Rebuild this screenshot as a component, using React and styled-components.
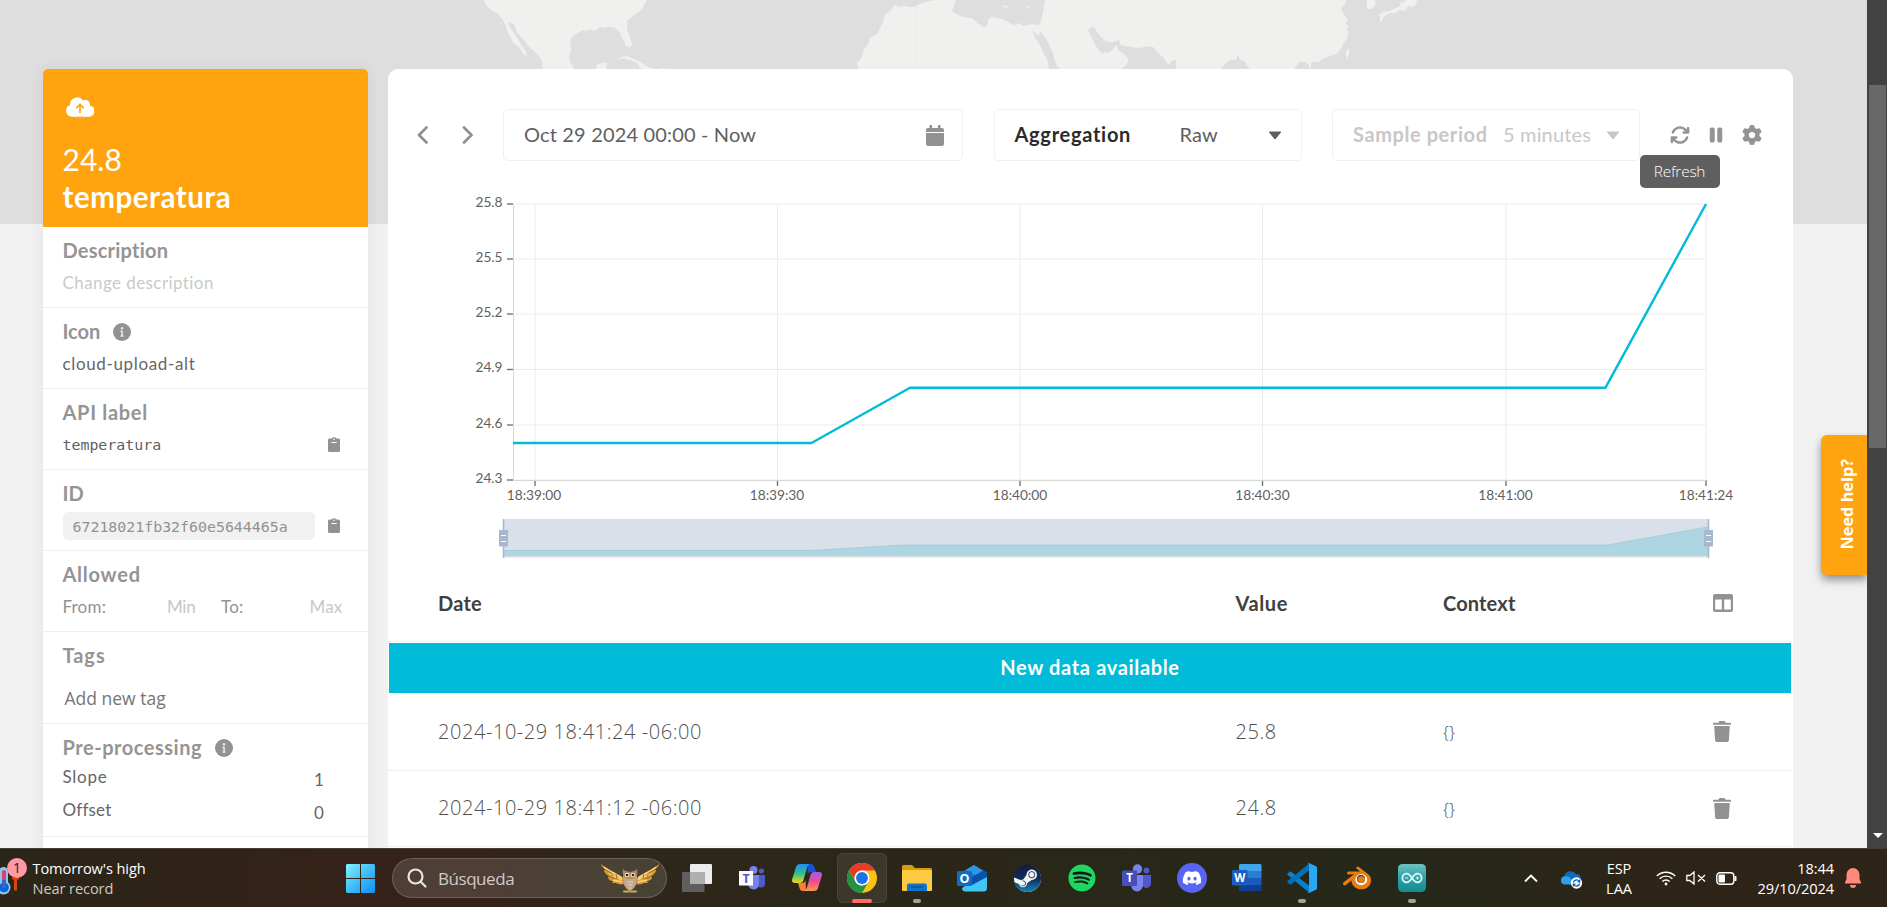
import React from 'react';
import styled, { createGlobalStyle, css } from 'styled-components';
import { FaSteam, FaSpotify, FaDiscord } from 'react-icons/fa';
import { FaArrowsRotate, FaPause, FaGear } from 'react-icons/fa6';
import { SiBlender } from 'react-icons/si';

const Global = createGlobalStyle`
  * { box-sizing: border-box; }
  body { margin: 0; overflow: hidden; font-family: Lato, "Open Sans", sans-serif; color: #5f5f5f; }
  svg { display: block; flex: none; }
`;

const Screen = styled.div`
  width: 1887px;
  height: 907px;
  display: flex;
  flex-direction: column;
  overflow: hidden;
`;
const Browser = styled.div`
  height: 848px;
  display: flex;
  overflow: hidden;
`;
const Page = styled.main`
  position: relative;
  width: 1867px;
  height: 848px;
  overflow: hidden;
  display: flex;
  align-items: flex-start;
  gap: 20px;
  padding: 69px 74px 0 43px;
  background: linear-gradient(#dedede 0 224px, #f1f1f1 224px);
`;
const MapLayer = styled.svg`
  position: absolute;
  left: 0;
  top: 0;
`;

/* ---------- sidebar ---------- */
const Sidebar = styled.aside`
  position: relative;
  width: 325px;
  height: 900px;
  flex: none;
  background: #fff;
  border-radius: 5px 5px 0 0;
  box-shadow: 0 0 14px rgba(0, 40, 30, 0.07);
`;
const SideHead = styled.header`
  height: 158px;
  padding: 28px 20px 0 19.5px;
  background: #ffa30e;
  color: #fff;
  border-radius: 5px 5px 0 0;
`;
const HeadIcon = styled.div`
  height: 21px;
  padding-left: 3.5px;
`;
const HeadValue = styled.div`
  margin-top: 23px;
  font-size: 30px;
  line-height: 36px;
`;
const HeadName = styled.div`
  font-size: 29.5px;
  font-weight: 700;
  line-height: 36px;
  letter-spacing: 0.55px;
  margin-top: 1.5px;
`;
const Section = styled.section`
  height: ${(p) => p.$h}px;
  padding: 11px 20px 0 19.5px;
  border-bottom: 1px solid #efefef;
`;
const SectionTitle = styled.h3`
  display: flex;
  align-items: center;
  gap: 13px;
  height: 24px;
  margin: 0;
  font-size: 20px;
  font-weight: 700;
  line-height: 24px;
  letter-spacing: ${(p) => p.$ls}px;
  color: #949494;
  svg { margin: 2px 0 0 0; }
`;
const Field = styled.div`
  display: flex;
  align-items: center;
  height: 24px;
  margin-top: ${(p) => p.$gap ?? 9}px;
  padding-right: ${(p) => p.$right ?? 8.5}px;
  justify-content: ${(p) => (p.$split ? 'space-between' : 'flex-start')};
`;
const FieldText = styled.span`
  font-size: 17px;
  line-height: 24px;
  letter-spacing: ${(p) => p.$ls ?? 0.2}px;
  color: ${(p) => p.$color ?? '#666'};
  ${(p) => p.$w && css`width: ${p.$w}px;`}
  text-align: ${(p) => (p.$end ? 'right' : 'left')};
`;
const Lowered = styled(FieldText)`
  padding-top: 6px;
`;
const Mono = styled.span`
  font-family: "DejaVu Sans Mono", monospace;
  font-size: 14.9px;
  line-height: 24px;
  color: ${(p) => p.$color ?? '#5f5f5f'};
`;
const IdBox = styled.div`
  width: 252px;
  height: 28px;
  padding: 3px 10px;
  border-radius: 5px;
  background: #f1f1f1;
`;
const TagInput = styled.div`
  margin: 19px 0 0 2px;
  font: 400 17.5px/24px "Open Sans", sans-serif;
  color: #757575;
`;
const IdField = styled(Field)`
  height: 28px;
  margin-top: 7px;
`;

/* ---------- main card ---------- */
const Card = styled.section`
  position: relative;
  width: 1405px;
  height: 900px;
  flex: none;
  padding-top: 40px;
  background: #fff;
  border-radius: 10px 10px 0 0;
`;
const Toolbar = styled.div`
  display: flex;
  align-items: center;
  height: 52px;
  padding-left: 28.5px;
`;
const Arrows = styled.div`
  display: flex;
  gap: 33px;
  width: 86.5px;
`;
const Box = styled.div`
  display: flex;
  align-items: center;
  width: ${(p) => p.$w}px;
  height: 52px;
  margin-right: 30.5px;
  padding: 0 ${(p) => p.$pr}px 3px 20px;
  border: 1px solid #f0f0f0;
  border-radius: 5px;
  white-space: nowrap;
  font-size: 20px;
  line-height: 24px;
  color: ${(p) => (p.$disabled ? '#c7c7c7' : '#5f5f5f')};
  svg { margin-top: 3px; }
`;
const BoxLabel = styled.b`
  width: ${(p) => p.$w}px;
  color: ${(p) => (p.$disabled ? '#c7c7c7' : '#2b2b2b')};
  letter-spacing: ${(p) => (p.$disabled ? 0.58 : 0.72)}px;
`;
const BoxText = styled.span`
  flex: 1;
  letter-spacing: 0.16px;
`;
const Actions = styled.div`
  position: relative;
  display: flex;
  align-items: center;
  margin-left: -0.5px;
  color: #949494;
  font-size: 20px;
  svg:nth-child(2) { margin: 0 16.5px 0 16px; }
`;
const Tooltip = styled.div`
  position: absolute;
  left: -30px;
  top: 30px;
  width: 80px;
  height: 33px;
  border-radius: 5px;
  background: #5f5f5f;
  color: #fff;
  text-align: center;
  font: 300 15.4px/33px "Open Sans", sans-serif;
  letter-spacing: -0.2px;
`;
const ChartSvg = styled.svg`
  margin-top: 24px;
  text {
    font: 400 13.7px Lato, sans-serif;
    fill: #5f5f5f;
  }
`;
const Row = styled.div`
  display: grid;
  grid-template-columns: 797.5px 207.5px 1fr 20px;
  align-items: center;
  height: ${(p) => p.$h}px;
  padding: 0 60px ${(p) => p.$pb ?? 0}px 50px;
  border-bottom: 1px solid #efefef;
`;
const Th = styled.span`
  font-size: 20px;
  font-weight: 700;
  line-height: 24px;
  letter-spacing: ${(p) => p.$ls}px;
  color: #404040;
`;
const Td = styled.span`
  font: 300 20px/24px "Open Sans", sans-serif;
  letter-spacing: 0.56px;
  color: #505050;
`;
const Braces = styled(Td)`
  padding-top: 1px;
  font-size: 17px;
  letter-spacing: 0;
`;
const Banner = styled.div`
  height: 50px;
  margin: 1px 2px 0 1px;
  background: #00bcd8;
  color: #fff;
  text-align: center;
  font-weight: 700;
  font-size: 20px;
  line-height: 48px;
  letter-spacing: 0.66px;
`;
const HelpTab = styled.div`
  position: absolute;
  right: 0;
  top: 434.5px;
  width: 46px;
  height: 140px;
  display: flex;
  align-items: center;
  justify-content: center;
  border-radius: 6px 0 0 6px;
  background: #ffa30e;
  color: #fff;
  box-shadow: 0 5px 9px rgba(0, 0, 0, 0.4);
  span {
    writing-mode: vertical-rl;
    transform: rotate(180deg);
    font: 700 16.3px/24px "Open Sans", sans-serif;
    margin-left: 5px;
  }
`;
const Scrollbar = styled.div`
  width: 20px;
  height: 848px;
  padding: 85px 1px 9px 2px;
  display: flex;
  flex-direction: column;
  justify-content: space-between;
  align-items: center;
  background: #424242;
`;
const Thumb = styled.div`
  width: 17px;
  height: 363px;
  background: #686868;
`;

/* ---------- taskbar ---------- */
const Taskbar = styled.footer`
  height: 59px;
  display: flex;
  align-items: center;
  border-top: 1px solid #453f35;
  background: linear-gradient(90deg, #2b2618 0, #2f2317 160px, #352218 330px, #352218 480px, #2d2718 640px, #2a2718 1000px, #252819 1400px, #2d2517 1650px, #2e2417 1887px);
  font-family: "Open Sans", sans-serif;
  color: #fff;
`;
const Weather = styled.div`
  width: 333px;
  display: flex;
  align-items: center;
  gap: 4.5px;
`;
const Stack = styled.div`
  display: flex;
  flex-direction: column;
  width: ${(p) => p.$w ?? 'auto'};
  margin-left: ${(p) => p.$ml ?? 0}px;
  margin-top: -1px;
  text-align: ${(p) => p.$align ?? 'left'};
  font-size: 14.6px;
  line-height: 20px;
  letter-spacing: -0.1px;
  white-space: nowrap;
`;
const Dim = styled.span`
  color: #cfcbc6;
`;
const Search = styled.div`
  width: 275px;
  height: 40px;
  margin: 0 2.5px 0 4px;
  padding: 0 7px 0 14px;
  display: flex;
  align-items: center;
  border: 1px solid rgba(255, 255, 255, 0.17);
  border-radius: 20px;
  background: rgba(255, 255, 255, 0.13);
  color: #cfcac5;
  font-size: 17px;
  letter-spacing: -0.45px;
  span { flex: 1; padding-left: 11px; }
`;
const Cell = styled.div`
  position: relative;
  width: 55px;
  height: 58px;
  display: flex;
  align-items: center;
  justify-content: center;
`;
const Tile = styled.div`
  width: 50px;
  height: 50px;
  display: flex;
  align-items: center;
  justify-content: center;
  border-radius: 6px;
  ${(p) => p.$active && css`
    background: rgba(255, 255, 255, 0.08);
    box-shadow: inset 0 0 0 1px rgba(255, 255, 255, 0.07);
  `}
`;
const Mark = styled.i`
  position: absolute;
  bottom: 4px;
  width: ${(p) => (p.$active ? 20 : 8)}px;
  height: 4px;
  border-radius: 2px;
  background: ${(p) => (p.$active ? '#ff6b60' : '#a3a198')};
`;
const Glyph = styled.span`
  display: flex;
  align-items: center;
  justify-content: center;
  width: ${(p) => p.$s}px;
  height: ${(p) => p.$s}px;
  border-radius: 50%;
  background: ${(p) => p.$bg};
  color: ${(p) => p.$fg};
  font-size: ${(p) => p.$f}px;
`;
const Tray = styled.div`
  display: flex;
  align-items: center;
  padding-left: 84.5px;
`;

/* ---------- small drawings ---------- */
const CloudUpload = () => (
  <svg width="28" height="20" viewBox="0 0 28 20">
    <path d="M6 19.700A6 6 0 0 1 4 8.100 7.200 7.200 0 0 1 17 3.400a4.600 4.600 0 0 1 6.800 5A5.700 5.700 0 0 1 22.300 19.700z" fill="#fff" />
    <path d="M14 16V8M10.200 11.200L14 7.400l3.800 3.800" fill="none" stroke="#ffa30e" strokeWidth="1.700" />
  </svg>
);
const InfoIcon = () => (
  <svg width="18" height="18" viewBox="0 0 18 18">
    <circle cx="9" cy="9" r="9" fill="#929292" />
    <path d="M7.500 7.600h2.300v5h.8v1.100H7.400v-1.100h.9V8.700h-.8z" fill="#eee" />
    <circle cx="9" cy="5.300" r="1.200" fill="#eee" />
  </svg>
);
const Clipboard = () => (
  <svg width="12" height="16" viewBox="0 0 12 16">
    <path d="M1.500 1.500H3.600A2.500 1.800 0 0 1 8.400 1.500h2.100A1.500 1.500 0 0 1 12 3v10.500a1.500 1.500 0 0 1-1.500 1.500h-9A1.500 1.500 0 0 1 0 13.500V3a1.500 1.500 0 0 1 1.500-1.500z" fill="#929292" />
    <circle cx="6" cy="2.200" r=".8" fill="#fff" />
    <path d="M3.300 5.500h5.400" stroke="#fff" strokeWidth="1" />
  </svg>
);
const Chevron = ({ right }) => (
  <svg width="12" height="18" viewBox="0 0 12 18">
    <path d={right ? 'M2 1.5 9.5 9 2 16.5' : 'M9.5 1.5 2 9 9.5 16.5'} fill="none" stroke="#909090" strokeWidth="2.7" strokeLinecap="round" strokeLinejoin="round" />
  </svg>
);
const Caret = () => (
  <svg width="14" height="9" viewBox="0 0 14 9">
    <path d="M1.200 1h11.600L7 8z" fill="currentColor" stroke="currentColor" strokeLinejoin="round" />
  </svg>
);
const Calendar = () => (
  <svg width="18" height="21" viewBox="0 0 18 21">
    <path d="M0 7V5a2 2 0 0 1 2-2h1.500V1a1 1 0 0 1 2.600 0v2h5.800V1a1 1 0 0 1 2.600 0v2H16a2 2 0 0 1 2 2v2zM0 8h18v11a2 2 0 0 1-2 2H2a2 2 0 0 1-2-2z" fill="#929292" />
  </svg>
);
const Columns = () => (
  <svg width="20" height="18" viewBox="0 0 20 18">
    <path fillRule="evenodd" d="M2 0h16a2 2 0 0 1 2 2v14a2 2 0 0 1-2 2H2a2 2 0 0 1-2-2V2a2 2 0 0 1 2-2zM2.200 5.500v10h6.600v-10zM11.200 5.500v10h6.600v-10z" fill="#929292" />
  </svg>
);
const Trash = () => (
  <svg width="18" height="21" viewBox="0 0 18 21">
    <path d="M.8 1.800h4.400L6 .6C6.200.2 6.500 0 7 0h4c.5 0 .8.2 1 .6l.8 1.200h4.400c.5 0 .8.3.8.7v1c0 .2-.1.300-.4.300H.4C.1 3.800 0 3.700 0 3.500v-1c0-.4.3-.7.8-.7zM1.200 5h15.600l-.9 14.200c-.1 1-.9 1.800-2 1.800H4.100c-1.100 0-1.900-.8-2-1.800z" fill="#929292" />
  </svg>
);

const WorldMap = () => (
  <MapLayer width="1867" height="70" viewBox="0 0 1867 70" fill="#f0f0ee">
    <path d="M484 0L486 5 490 9 498 14 503 20 506 26 508 33 511 38 513 43 519 47 523 54 527 56 525 50 519 41 514 33 510 28 508.500 22 514 24 517 32 523 39 528 46 534 51 539 56 542 61 542.500 70H575L571 64 569 59 571 50 570 41 573 36 578 33 583 30 587 31 590 29.500 595 31 600 27 605 28 609 26.500 615 28 620.500 33 621 37 624 41 625 45 629 48 632 45 630.500 38 627 30 627 21 633 16 639 12 643 8 644 4 647 0z" />
    <path d="M595 70L597 65 602 62.500 607.500 63 606 67 606 70zM617 60L621 57 627 56 634 59 641 62 646 66 653 69 645 69 640 68 637 63 631 60.500 624 58.500zM658 69.500L663 68.300 668 69.500z" />
    <path d="M897 0L895 4 898 7 904 6 910 7 915 7 919 4 925 2.500 931 0.500 939 0H956L954 5 952 11 956 14 963 17 973 18.500 977 23 984 27.500 988 24 988 20 991 17 1001 19 1008 22 1014 25.500 1018 23 1024 26 1032 24 1039 25 1041 21 1043 12 1045 0H1346L1345 4 1341 8 1344 15 1348 20 1346 23 1349 27 1346 29 1349 32 1347 38 1344 43 1340 50 1336 54 1330 56 1324 58 1318 62 1312 62 1308 65 1306 62 1300 62 1296 66 1293 70H1251L1247 66 1244 61 1240 60 1238 54 1236 60 1230 60 1226 63 1222 67 1220 70H1176V60L1173 60 1169 65 1166 62 1163 57 1158 53 1153 47 1146 46.500 1139 48 1132 47 1126 46 1120 45 1119 40 1112 42.500 1106 41 1101 37 1097 32 1094 27 1091 27 1088 30 1092 38 1096 46 1099 50 1101 53 1109 52.500 1113 49 1117 45 1118 50 1124 54 1129 60 1126 65 1121 70H1062L1057 66 1055 61 1053 53 1050 47 1046 39 1042 34 1040 30 1039 36 1034 32 1032 29 1034 36 1040 45 1044 54 1048 61 1049 70H859L857 63 862 57 863 51 868 44 870 38 877 34 880 28 883 22 885 15 890 11 895 5z" />
    <path d="M1367 0H1375.500L1375 6 1371 9 1367 9zM1379 14L1384 12 1390 11 1396 8 1400 6 1401 1 1403 3 1406 0H1417L1416 5 1412 7 1408 6 1405 11 1400 10 1396 13 1390 13 1386 15 1383 18 1381 23z" />
    <path d="M1346 51L1349 48 1349 54 1346.500 60zM1309 63L1311 62V67L1309 68z" />
    <path d="M1001 5L1007 6 1010 8 1003 7zM1025 7L1031 6 1028 8.500zM1018 0L1022 3 1019 2z" fill="#ececea" />
    <path d="M917 7v62" stroke="#ebebe9" strokeWidth="1" />
  </MapLayer>
);

/* ---------- chart ---------- */
const yTicks = [['25.8', 204], ['25.5', 259], ['25.2', 314], ['24.9', 369.5], ['24.6', 425], ['24.3', 480]];
const xTicks = [['18:39:00', 535, 534], ['18:39:30', 777.5, 777], ['18:40:00', 1020, 1020], ['18:40:30', 1262.5, 1262.5], ['18:41:00', 1506, 1505.5], ['18:41:24', 1706, 1706]];

const ZoomHandle = ({ x }) => (
  <g>
    <path d={`M${x} 519v39`} stroke="#a7b7cc" strokeWidth="1.500" />
    <rect x={x - 4.5} y="530" width="9" height="16.500" fill="#a7b7cc" />
    <path d={`M${x - 2.5} 535.500h5M${x - 2.5} 541.500h5`} stroke="#fff" strokeWidth="1.200" />
  </g>
);
const Chart = () => (
  <ChartSvg width="1405" height="385" viewBox="388 185 1405 385">
    {yTicks.map(([t, y]) => (
      <g key={t}>
        <path d={`M513 ${y}H1706`} stroke="#ececec" />
        <path d={`M507 ${y}h6`} stroke="#6a6a6a" strokeWidth="1.300" />
        <text x="502.500" y={y + 2.7} textAnchor="end">{t}</text>
      </g>
    ))}
    {xTicks.map(([t, x, c]) => (
      <g key={t}>
        <path d={`M${x} 204V480`} stroke="#ececec" />
        <path d={`M${x} 480v6`} stroke="#6a6a6a" strokeWidth="1.300" />
        <text x={c} y="499.700" textAnchor="middle">{t}</text>
      </g>
    ))}
    <path d="M513.500 204V480.500H1706" fill="none" stroke="#d8d8d8" />
    <path d="M513 443H811.500L910 387.700H1605.500L1706 204" fill="none" stroke="#00bcd8" strokeWidth="2.400" strokeLinejoin="round" />
    <rect x="503.500" y="519.500" width="1205" height="37.500" fill="#dae0ea" stroke="#dcdfdf" />
    <path d="M504 556V550.500H810L905 545H1608L1708 527V556z" fill="#add5e2" />
    <path d="M504 550.500H810L905 545H1608L1708 527" fill="none" stroke="#a3c8d6" strokeWidth=".8" />
    <ZoomHandle x={503.5} />
    <ZoomHandle x={1708.5} />
  </ChartSvg>
);

/* ---------- taskbar drawings ---------- */
const Thermo = () => (
  <svg width="28" height="40" viewBox="0 0 28 40">
    <rect x="-1" y="9" width="9" height="22" rx="4.500" fill="#8ec5f4" />
    <circle cx="3.500" cy="29.500" r="7" fill="#8ec5f4" />
    <path d="M4 14v14" stroke="#d8456a" strokeWidth="4" strokeLinecap="round" />
    <circle cx="4" cy="29.500" r="4.800" fill="#0a63d8" />
    <path d="M4 22v8" stroke="#3a63c8" strokeWidth="4" />
    <path d="M15.500 20v12.500" stroke="#d9480f" strokeWidth="3" />
    <path d="M12 20.500h7" stroke="#d9480f" strokeWidth="2" />
    <circle cx="17" cy="10" r="10" fill="#ff99a4" />
    <text x="17" y="15" textAnchor="middle" fontFamily="Open Sans" fontSize="14" fill="#222">1</text>
  </svg>
);
const Windows = () => (
  <svg width="29" height="29" viewBox="0 0 29 29">
    <defs><linearGradient id="win" x1="0" y1="0" x2="1" y2="1"><stop offset="0" stopColor="#84f3ff" /><stop offset=".5" stopColor="#41bdf8" /><stop offset="1" stopColor="#0c8ff5" /></linearGradient></defs>
    <path d="M1 0h13v14H0V1zM15 0h13l1 1v13H15zM0 15h14v14H1l-1-1zM15 15h14v13l-1 1H15z" fill="url(#win)" />
  </svg>
);
const Magnifier = () => (
  <svg width="20" height="20" viewBox="0 0 20 20" fill="none" stroke="#e8e6e4" strokeWidth="2.200" strokeLinecap="round">
    <circle cx="8.500" cy="8.500" r="7" /><path d="M13.700 13.700l4.800 4.800" />
  </svg>
);
const Owl = () => (
  <svg width="58" height="30" viewBox="0 0 58 30">
    <path d="M0 1C6 7 15 9 22 15L23 21C19 22 17 21 15 20L11 20 12 18C8 18 7 15 7 14L9 14C5 12 3 9 3 7L5 7C2 5 0 3 0 1zM58 1C52 7 43 9 36 15L35 21C39 22 41 21 43 20L47 20 46 18C50 18 51 15 51 14L49 14C53 12 55 9 55 7L53 7C56 5 58 3 58 1z" fill="#d99a35" />
    <path d="M3 4C9 9 16 11 21 15M8 10C12 13 17 14 21 17M12 17C15 18 18 18 21 19M55 4C49 9 42 11 37 15M50 10C46 13 41 14 37 17M46 17C43 18 40 18 37 19" stroke="#f8d77c" strokeWidth="1.500" fill="none" />
    <path d="M5 7l5 3M9 14l5 2M9 9l3 4M15 11l1 5M53 7l-5 3M49 14l-5 2M49 9l-3 4M43 11l-1 5" stroke="#8a5a20" strokeWidth=".8" />
    <path d="M22 14c0-4 3-3 7-3s7-1 7 3c0 6-1 11-7 14-6-3-7-8-7-14z" fill="#c2a58a" />
    <path d="M22 6c2 2.500 4 2 7 3 3-1 5-.5 7-3 1 5 0 10-7 10s-8-5-7-10z" fill="#a98468" />
    <circle cx="26" cy="12" r="2.300" fill="#fff0b0" /><circle cx="32" cy="12" r="2.300" fill="#fff0b0" />
    <circle cx="26" cy="12" r="1.300" fill="#222" /><circle cx="32" cy="12" r="1.300" fill="#222" />
    <path d="M28 13.500h2l-1 3z" fill="#e8a12d" />
    <path d="M26 19h6M26.500 22h5M27.500 25h3" stroke="#ead9c6" strokeWidth=".9" />
    <path d="M23 28.500h5M30 28.500h5" stroke="#d8a85e" strokeWidth="2" strokeLinecap="round" />
  </svg>
);
const TaskView = () => (
  <svg width="30" height="28" viewBox="0 0 30 28">
    <rect x="8" y="0" width="22" height="20" rx="1" fill="#ececec" />
    <rect x="0" y="8" width="22.500" height="20" rx="1" fill="#5f5f5f" />
    <path d="M8 8h14.500v12H8z" fill="#b0b0b0" />
  </svg>
);
const TeamsOld = () => (
  <svg width="28" height="26" viewBox="0 0 28 26">
    <circle cx="15.500" cy="5" r="4" fill="#7b83eb" /><circle cx="23.500" cy="6" r="2.600" fill="#5059c9" />
    <path d="M19 10h8v8a4 4 0 0 1-8 1z" fill="#5059c9" />
    <path d="M10 10h11v8a5.500 6 0 0 1-11 1z" fill="#7b83eb" />
    <rect x="1" y="6" width="14" height="14.500" fill="#fff" />
    <text x="8" y="17.500" textAnchor="middle" fontFamily="Open Sans" fontWeight="700" fontSize="12.500" fill="#5059c9">T</text>
  </svg>
);
const Copilot = () => (
  <svg width="30" height="28" viewBox="0 0 30 28">
    <defs>
      <linearGradient id="cpa" x1="0" y1="0" x2="0" y2="1"><stop offset="0" stopColor="#1f8ff0" /><stop offset=".5" stopColor="#2fc08a" /><stop offset="1" stopColor="#f6d21c" /></linearGradient>
      <linearGradient id="cpb" x1="0" y1="0" x2="0" y2="1"><stop offset="0" stopColor="#a05cf0" /><stop offset=".5" stopColor="#f04c8c" /><stop offset="1" stopColor="#fb9a4b" /></linearGradient>
    </defs>
    <path d="M16 0h3c2 0 3 1 3.500 3l1.500 5h-5c-2 0-3 1-3.500 3z" fill="#1d4fd0" />
    <path d="M8 0h10c-2 1-2.500 2-3 4l-3.500 12c-.6 2-1.500 3-4 3H3c-2.500 0-3.500-1.500-2.800-4L4 3c.6-2 2-3 4-3z" fill="url(#cpa)" />
    <path d="M14 27H11c-2 0-3-1-3.500-3L6 19h4c2 0 3-1 3.500-3z" fill="#f9803c" />
    <path d="M22 27H12c2-1 2.500-2 3-4l3.500-12c.6-2 1.500-3 4-3H27c2.500 0 3.500 1.500 2.800 4L26 24c-.6 2-2 3-4 3z" fill="url(#cpb)" />
  </svg>
);
const Chrome = () => (
  <svg width="30" height="30" viewBox="0 0 48 48">
    <circle cx="24" cy="24" r="24" fill="#fbc116" />
    <path d="M3.200 12A24 24 0 0 1 44.800 12H24a12 12 0 0 0-10.400 18z" fill="#e33b2e" />
    <path d="M3.200 12A24 24 0 0 0 24 48L34.400 30A12 12 0 0 1 13.600 30z" fill="#229342" />
    <circle cx="24" cy="24" r="12" fill="#fff" /><circle cx="24" cy="24" r="9.500" fill="#1a73e8" />
  </svg>
);
const Folder = () => (
  <svg width="30" height="28" viewBox="0 0 30 28">
    <path d="M0 2.500A1.500 1.500 0 0 1 1.500 1H10l3 3h15.500A1.500 1.500 0 0 1 30 5.500V10H0z" fill="#d99a10" />
    <rect x="0" y="6" width="30" height="21" rx="1" fill="#fdcb42" />
    <path d="M5 27v-5.500a2 2 0 0 1 2-2h16a2 2 0 0 1 2 2V27z" fill="#1173c7" />
    <path d="M9 23h12" stroke="#0b4c8c" strokeWidth="1.200" />
  </svg>
);
const Outlook = () => (
  <svg width="30" height="27" viewBox="0 0 30 27">
    <path d="M5 7L17 0l13 8v5L17 21 5 14z" fill="#1a76cf" />
    <path d="M17 0l13 8-7 5-14-8z" fill="#2d96e6" />
    <path d="M14 17L30 8v15a3.500 3.500 0 0 1-3.500 3.500H8A3.500 3.500 0 0 1 5 23z" fill="#3fc6f5" />
    <path d="M12 14l15-9 3 3v4l-15 8z" fill="#0a52a8" />
    <rect x="0" y="6" width="15" height="15" rx="1.500" fill="#0f6cc4" />
    <text x="7.500" y="18" textAnchor="middle" fontFamily="Open Sans" fontWeight="700" fontSize="12.500" fill="#fff">O</text>
  </svg>
);
const Teams = () => (
  <svg width="30" height="28" viewBox="0 0 30 28">
    <circle cx="15.500" cy="5" r="4.700" fill="#7b83eb" /><circle cx="24.500" cy="6.500" r="3" fill="#5059c9" />
    <path d="M20 11h9v8a4.500 4.500 0 0 1-9 1z" fill="#5059c9" />
    <path d="M9 11h12v10a6 6.500 0 0 1-12 0z" fill="#7b83eb" />
    <rect x="0" y="6.500" width="15" height="15.500" rx="1" fill="#464eb8" />
    <text x="7.500" y="18.200" textAnchor="middle" fontFamily="Open Sans" fontWeight="700" fontSize="11.500" fill="#fff">T</text>
  </svg>
);
const Word = () => (
  <svg width="30" height="28" viewBox="0 0 30 28">
    <path d="M8 0h20.500l1 1v6H7V1z" fill="#41a5ee" /><path d="M7 7h22.500v7H7z" fill="#2b7cd3" />
    <path d="M7 14h22.500v7H7z" fill="#185abd" /><path d="M7 21h22.500v6H8l-1-1z" fill="#103f91" />
    <rect x="0" y="6" width="15.500" height="15.500" rx="1" fill="#1b5cbe" />
    <text x="7.800" y="18" textAnchor="middle" fontFamily="Open Sans" fontWeight="700" fontSize="11.500" fill="#fff">W</text>
  </svg>
);
const VsCode = () => (
  <svg width="30" height="30" viewBox="0 0 30 30">
    <path d="M.6 10.500l2-1.800c.5-.4 1-.4 1.500 0L22 22.500v7L.6 12c-.5-.5-.5-1 0-1.500z" fill="#0a7fcf" />
    <path d="M.6 19.500l2 1.800c.5.400 1 .4 1.500 0L22 7.500v-7L.6 18c-.5.500-.5 1 0 1.500z" fill="#0072bd" />
    <path d="M22 0l7 3.200c.6.300 1 .8 1 1.400v20.800c0 .6-.4 1.100-1 1.400L22 30c-.8 0-1 0-1.500-.6 1 .5 1.500 0 1.500-1V1.600c0-1-.5-1.500-1.500-1 .5-.6.700-.6 1.500-.6z" fill="#27a8f2" />
  </svg>
);
const Arduino = () => (
  <svg width="28" height="28" viewBox="0 0 28 28">
    <defs><linearGradient id="ard" x1="0" y1="0" x2="0" y2="1"><stop offset="0" stopColor="#6fc0c2" /><stop offset=".5" stopColor="#2aa3a8" /><stop offset="1" stopColor="#158a90" /></linearGradient></defs>
    <rect width="28" height="28" rx="4.500" fill="url(#ard)" />
    <path d="M14 14C12 11 10.800 9.700 8.700 9.700a4.300 4.300 0 0 0 0 8.600C10.800 18.300 12 17 14 14s3.200-4.300 5.300-4.300a4.300 4.300 0 0 1 0 8.600C17.200 18.300 16 17 14 14z" fill="none" stroke="#e8f6f6" strokeWidth="1.800" />
    <path d="M7 14h3.200M17.800 14H21M19.400 12.400v3.200" stroke="#e8f6f6" strokeWidth="1" />
  </svg>
);
const SteamMark = styled(Glyph)`
  svg { fill: url(#steamFill); }
`;
const Steam = () => (
  <SteamMark $s={27} $f={28.5} $bg="#f4f4f4">
    <svg width="0" height="0"><defs><linearGradient id="steamFill" x1="0" y1="0" x2="0" y2="1"><stop offset="0" stopColor="#161a3a" /><stop offset=".5" stopColor="#0f2b5c" /><stop offset="1" stopColor="#1486b8" /></linearGradient></defs></svg>
    <FaSteam />
  </SteamMark>
);

const apps = [
  { icon: <TaskView /> },
  { icon: <TeamsOld /> },
  { icon: <Copilot /> },
  { icon: <Chrome />, active: true, mark: true },
  { icon: <Folder />, mark: true },
  { icon: <Outlook /> },
  { icon: <Steam /> },
  { icon: <Glyph $s={27} $f={28} $bg="#17181a" $fg="#1ed760"><FaSpotify /></Glyph> },
  { icon: <Teams /> },
  { icon: <Glyph $s={30} $f={20} $bg="#5865f2" $fg="#fff"><FaDiscord /></Glyph> },
  { icon: <Word /> },
  { icon: <VsCode />, mark: true },
  { icon: <Glyph $s={28} $f={28} $bg="radial-gradient(circle at 18px 15px, #265787 0 4px, #fff 4.5px 6.5px, transparent 7px)" $fg="#ea7d0d"><SiBlender /></Glyph> },
  { icon: <Arduino />, mark: true },
];

const UpChevron = () => (
  <svg width="14" height="9" viewBox="0 0 14 9"><path d="M1 7.500l6-6 6 6" fill="none" stroke="#fff" strokeWidth="1.800" /></svg>
);
const Cloud = styled.svg`
  margin: 3px 0 0 23px;
`;
const TrayIcons = styled.div`
  display: flex;
  align-items: center;
  gap: 10px;
  margin: 0 0 0 22px;
`;
const Bell = styled.svg`
  margin-left: 11px;
`;

export default function App() {
  return (
    <Screen>
      <Global />
      <Browser>
        <Page>
          <WorldMap />
          <Sidebar>
            <SideHead>
              <HeadIcon><CloudUpload /></HeadIcon>
              <HeadValue>24.8</HeadValue>
              <HeadName>temperatura</HeadName>
            </SideHead>
            <Section $h={81}>
              <SectionTitle $ls={0.22}>Description</SectionTitle>
              <Field><FieldText $ls={0.42} $color="#cacaca">Change description</FieldText></Field>
            </Section>
            <Section $h={81}>
              <SectionTitle $ls={0}>Icon<InfoIcon /></SectionTitle>
              <Field><FieldText $ls={0.65}>cloud-upload-alt</FieldText></Field>
            </Section>
            <Section $h={81}>
              <SectionTitle $ls={0.68}>API label</SectionTitle>
              <Field $split><Mono>temperatura</Mono><Clipboard /></Field>
            </Section>
            <Section $h={81}>
              <SectionTitle $ls={0}>ID</SectionTitle>
              <IdField $split>
                <IdBox><Mono $color="#929292">67218021fb32f60e5644465a</Mono></IdBox>
                <Clipboard />
              </IdField>
            </Section>
            <Section $h={81}>
              <SectionTitle $ls={0.74}>Allowed</SectionTitle>
              <Field $gap={9} $right={4.5}>
                <FieldText $w={60} $color="#929292">From:</FieldText>
                <FieldText $w={73} $end $ls={-0.2} $color="#c7c7c7">Min</FieldText>
                <FieldText $w={48} $color="#929292" $end>To:</FieldText>
                <FieldText $w={99} $end $color="#c7c7c7">Max</FieldText>
              </Field>
            </Section>
            <Section $h={92}>
              <SectionTitle $ls={0.96}>Tags</SectionTitle>
              <TagInput>Add new tag</TagInput>
            </Section>
            <Section $h={113}>
              <SectionTitle $ls={0.53}>Pre-processing<InfoIcon /></SectionTitle>
              <Field $gap={6} $right={24} $split><FieldText $ls={0.75}>Slope</FieldText><Lowered>1</Lowered></Field>
              <Field $gap={9} $right={24} $split><FieldText>Offset</FieldText><Lowered>0</Lowered></Field>
            </Section>
          </Sidebar>

          <Card>
            <Toolbar>
              <Arrows><Chevron /><Chevron right /></Arrows>
              <Box $w={460} $pr={18.5}><BoxText>Oct 29 2024 00:00 - Now</BoxText><Calendar /></Box>
              <Box $w={308} $pr={19}><BoxLabel $w={165}>Aggregation</BoxLabel><BoxText>Raw</BoxText><Caret /></Box>
              <Box $w={307.5} $pr={19} $disabled><BoxLabel $w={150} $disabled>Sample period</BoxLabel><BoxText>5 minutes</BoxText><Caret /></Box>
              <Actions>
                <FaArrowsRotate /><FaPause /><FaGear />
                <Tooltip>Refresh</Tooltip>
              </Actions>
            </Toolbar>
            <Chart />
            <Row $h={72} $pb={5}><Th $ls={0.25}>Date</Th><Th $ls={0.61}>Value</Th><Th $ls={0.15}>Context</Th><Columns /></Row>
            <Banner>New data available</Banner>
            <Row $h={78}><Td>2024-10-29 18:41:24 -06:00</Td><Td>25.8</Td><Braces>{'{}'}</Braces><Trash /></Row>
            <Row $h={76} $pb={1}><Td>2024-10-29 18:41:12 -06:00</Td><Td>24.8</Td><Braces>{'{}'}</Braces><Trash /></Row>
          </Card>
          <HelpTab><span>Need help?</span></HelpTab>
        </Page>
        <Scrollbar>
          <Thumb />
          <svg width="10" height="6" viewBox="0 0 10 6"><path d="M0 0h10L5 5z" fill="#fff" /></svg>
        </Scrollbar>
      </Browser>

      <Taskbar>
        <Weather>
          <Thermo />
          <Stack><span>Tomorrow's high</span><Dim>Near record</Dim></Stack>
        </Weather>
        <Cell><Windows /></Cell>
        <Search><Magnifier /><span>Búsqueda</span><Owl /></Search>
        {apps.map((a, i) => (
          <Cell key={i}>
            <Tile $active={a.active}>{a.icon}</Tile>
            {a.mark && <Mark $active={a.active} />}
          </Cell>
        ))}
        <Tray>
          <UpChevron />
          <Cloud width="22" height="18" viewBox="0 0 22 18">
            <path d="M4 13a4.500 4.500 0 0 1-.5-8.500A6.500 6.500 0 0 1 15 3a5 5 0 0 1 3 9z" fill="#0f6cbd" />
            <path d="M4 13.500a4 4 0 0 1 0-8c4-1 7 2 9 8z" fill="#2fa0ee" />
            <circle cx="15.500" cy="12" r="5.700" fill="#fff" />
            <path d="M12.300 11.500a3.300 3.300 0 0 1 6-1M18.700 12.500a3.300 3.300 0 0 1-6 1M18.700 8.500v2.300h-2.200M12.300 15.500v-2.300h2.200" fill="none" stroke="#1368b8" strokeWidth="1.300" />
          </Cloud>
          <Stack $w="30px" $ml={21} $align="center">ESP<span>LAA</span></Stack>
          <TrayIcons>
            <svg width="20" height="16" viewBox="0 0 20 16" fill="none" stroke="#fff" strokeWidth="1.400">
              <path d="M.8 6a13 13 0 0 1 18.400 0M3.600 8.800a9 9 0 0 1 12.800 0M6.300 11.500a5.200 5.200 0 0 1 7.400 0" />
              <circle cx="10" cy="14" r="1.400" fill="#fff" stroke="none" />
            </svg>
            <svg width="20" height="14" viewBox="0 0 20 14" fill="none" stroke="#fff" strokeWidth="1.300">
              <path d="M.8 4.500h3L8 1v12L3.800 9.500h-3zM12 4l7 6.500M19 4l-7 6.500" />
            </svg>
            <svg width="21" height="13" viewBox="0 0 21 13">
              <rect x=".8" y=".8" width="17" height="11.400" rx="3" fill="none" stroke="#fff" strokeWidth="1.400" />
              <rect x="2.500" y="2.500" width="6.500" height="8" rx="1" fill="#fff" />
              <path d="M18.500 4h1c.8 0 1 .5 1 1v3c0 .6-.2 1-1 1h-1z" fill="#fff" />
            </svg>
          </TrayIcons>
          <Stack $w="97px" $align="right">18:44<span>29/10/2024</span></Stack>
          <Bell width="16" height="20" viewBox="0 0 16 20">
            <path d="M8 0a6.500 6.500 0 0 1 6.500 6.500V11L16 14.500v1H0v-1L1.500 11V6.500A6.500 6.500 0 0 1 8 0zM5 17h6a3 3 0 0 1-6 0z" fill="#ff8a7a" />
          </Bell>
        </Tray>
      </Taskbar>
    </Screen>
  );
}
